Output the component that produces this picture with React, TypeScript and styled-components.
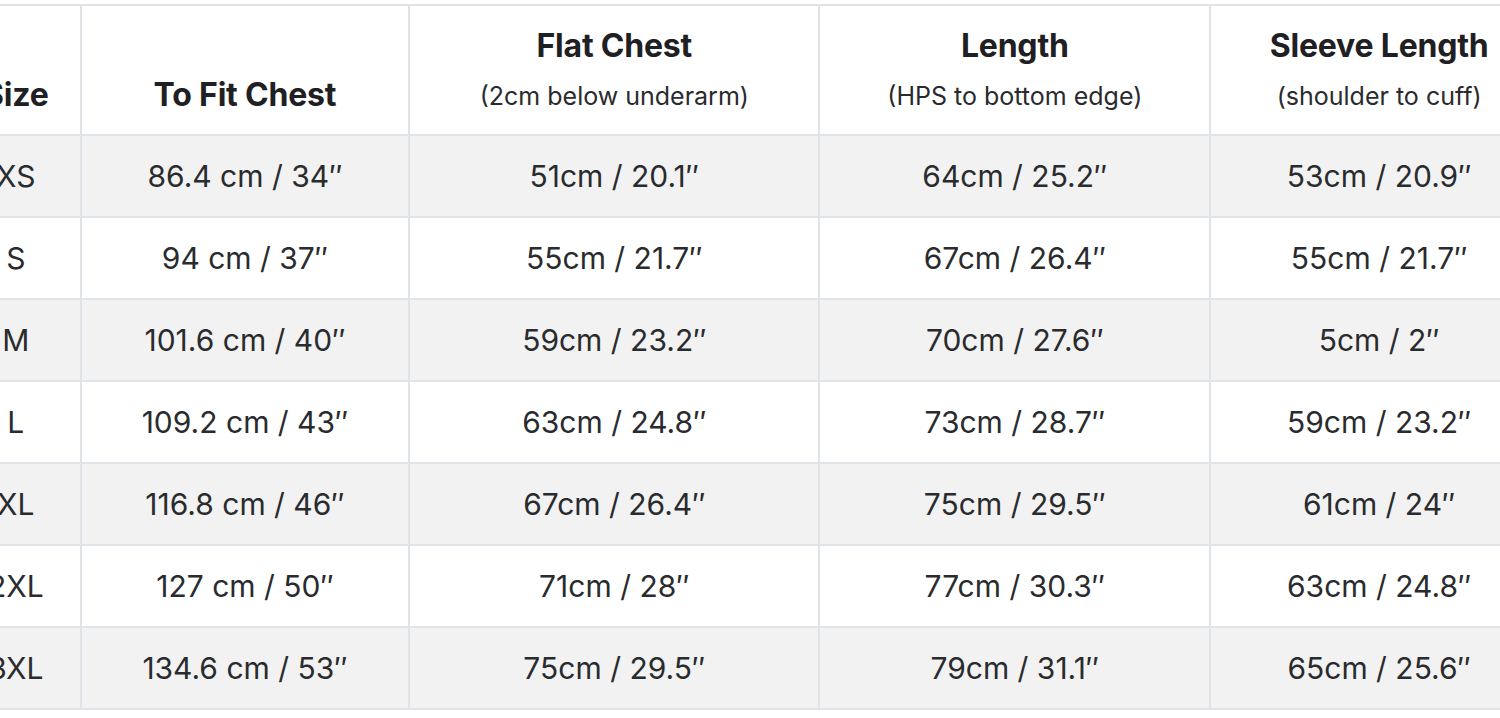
import React from "react";
import styled, { createGlobalStyle } from "styled-components";

const GlobalStyle = createGlobalStyle`
  body {
    margin: 0;
    background: #fff;
    font-family: Inter, "Noto Sans", "Liberation Sans", sans-serif;
    color: #222326;
  }
`;

const Viewport = styled.div`
  overflow: hidden;
  width: 1500px;
  height: 718px;
  padding-top: 4px;
  box-sizing: border-box;
`;

const Table = styled.table`
  border-collapse: collapse;
  margin-left: -50px;
  table-layout: fixed;
  width: 1599px;
`;

const HeadCell = styled.th<{ $w: number; $hasSub: boolean }>`
  box-sizing: border-box;
  width: ${(p) => p.$w}px;
  height: 130px;
  padding: 0 0 ${(p) => (p.$hasSub ? 23 : 20)}px;
  border: 2px solid #e0e3e7;
  vertical-align: bottom;
  text-align: center;
  font-weight: 700;
  font-size: 32px;
  line-height: 38px;
  color: #1f2023;
  letter-spacing: -0.2px;
`;

const Sub = styled.div`
  margin-top: 16px;
  font-weight: 400;
  font-size: 25px;
  line-height: 30px;
  letter-spacing: 0;
  color: #2a2b2e;
`;

const Row = styled.tr<{ $striped: boolean }>`
  background: ${(p) => (p.$striped ? "#f2f2f2" : "#fff")};
`;

const Cell = styled.td`
  height: 80px;
  padding: 0;
  border: 2px solid #e0e3e7;
  text-align: center;
  vertical-align: middle;
  font-size: 30px;
  color: #2a2b2e;
`;

const columns = [
  { title: "Size", w: 129 },
  { title: "To Fit Chest", w: 327 },
  { title: "Flat Chest", sub: "(2cm below underarm)", w: 408 },
  { title: "Length", sub: "(HPS to bottom edge)", w: 389 },
  { title: "Sleeve Length", sub: "(shoulder to cuff)", w: 336 },
];

const rows = [
  ["XS", "86.4 cm / 34″", "51cm / 20.1″", "64cm / 25.2″", "53cm / 20.9″"],
  ["S", "94 cm / 37″", "55cm / 21.7″", "67cm / 26.4″", "55cm / 21.7″"],
  ["M", "101.6 cm / 40″", "59cm / 23.2″", "70cm / 27.6″", "5cm / 2″"],
  ["L", "109.2 cm / 43″", "63cm / 24.8″", "73cm / 28.7″", "59cm / 23.2″"],
  ["XL", "116.8 cm / 46″", "67cm / 26.4″", "75cm / 29.5″", "61cm / 24″"],
  ["2XL", "127 cm / 50″", "71cm / 28″", "77cm / 30.3″", "63cm / 24.8″"],
  ["3XL", "134.6 cm / 53″", "75cm / 29.5″", "79cm / 31.1″", "65cm / 25.6″"],
];

const App: React.FunctionComponent = () => {
  return (
    <>
      <GlobalStyle />
      <Viewport>
        <Table>
          <thead>
            <tr>
              {columns.map((c) => (
                <HeadCell key={c.title} $w={c.w} $hasSub={!!c.sub}>
                  {c.title}
                  {c.sub && <Sub>{c.sub}</Sub>}
                </HeadCell>
              ))}
            </tr>
          </thead>
          <tbody>
            {rows.map((r, i) => (
              <Row key={r[0]} $striped={i % 2 === 0}>
                {r.map((v, j) => (
                  <Cell key={j}>{v}</Cell>
                ))}
              </Row>
            ))}
          </tbody>
        </Table>
      </Viewport>
    </>
  );
};

export default App;
